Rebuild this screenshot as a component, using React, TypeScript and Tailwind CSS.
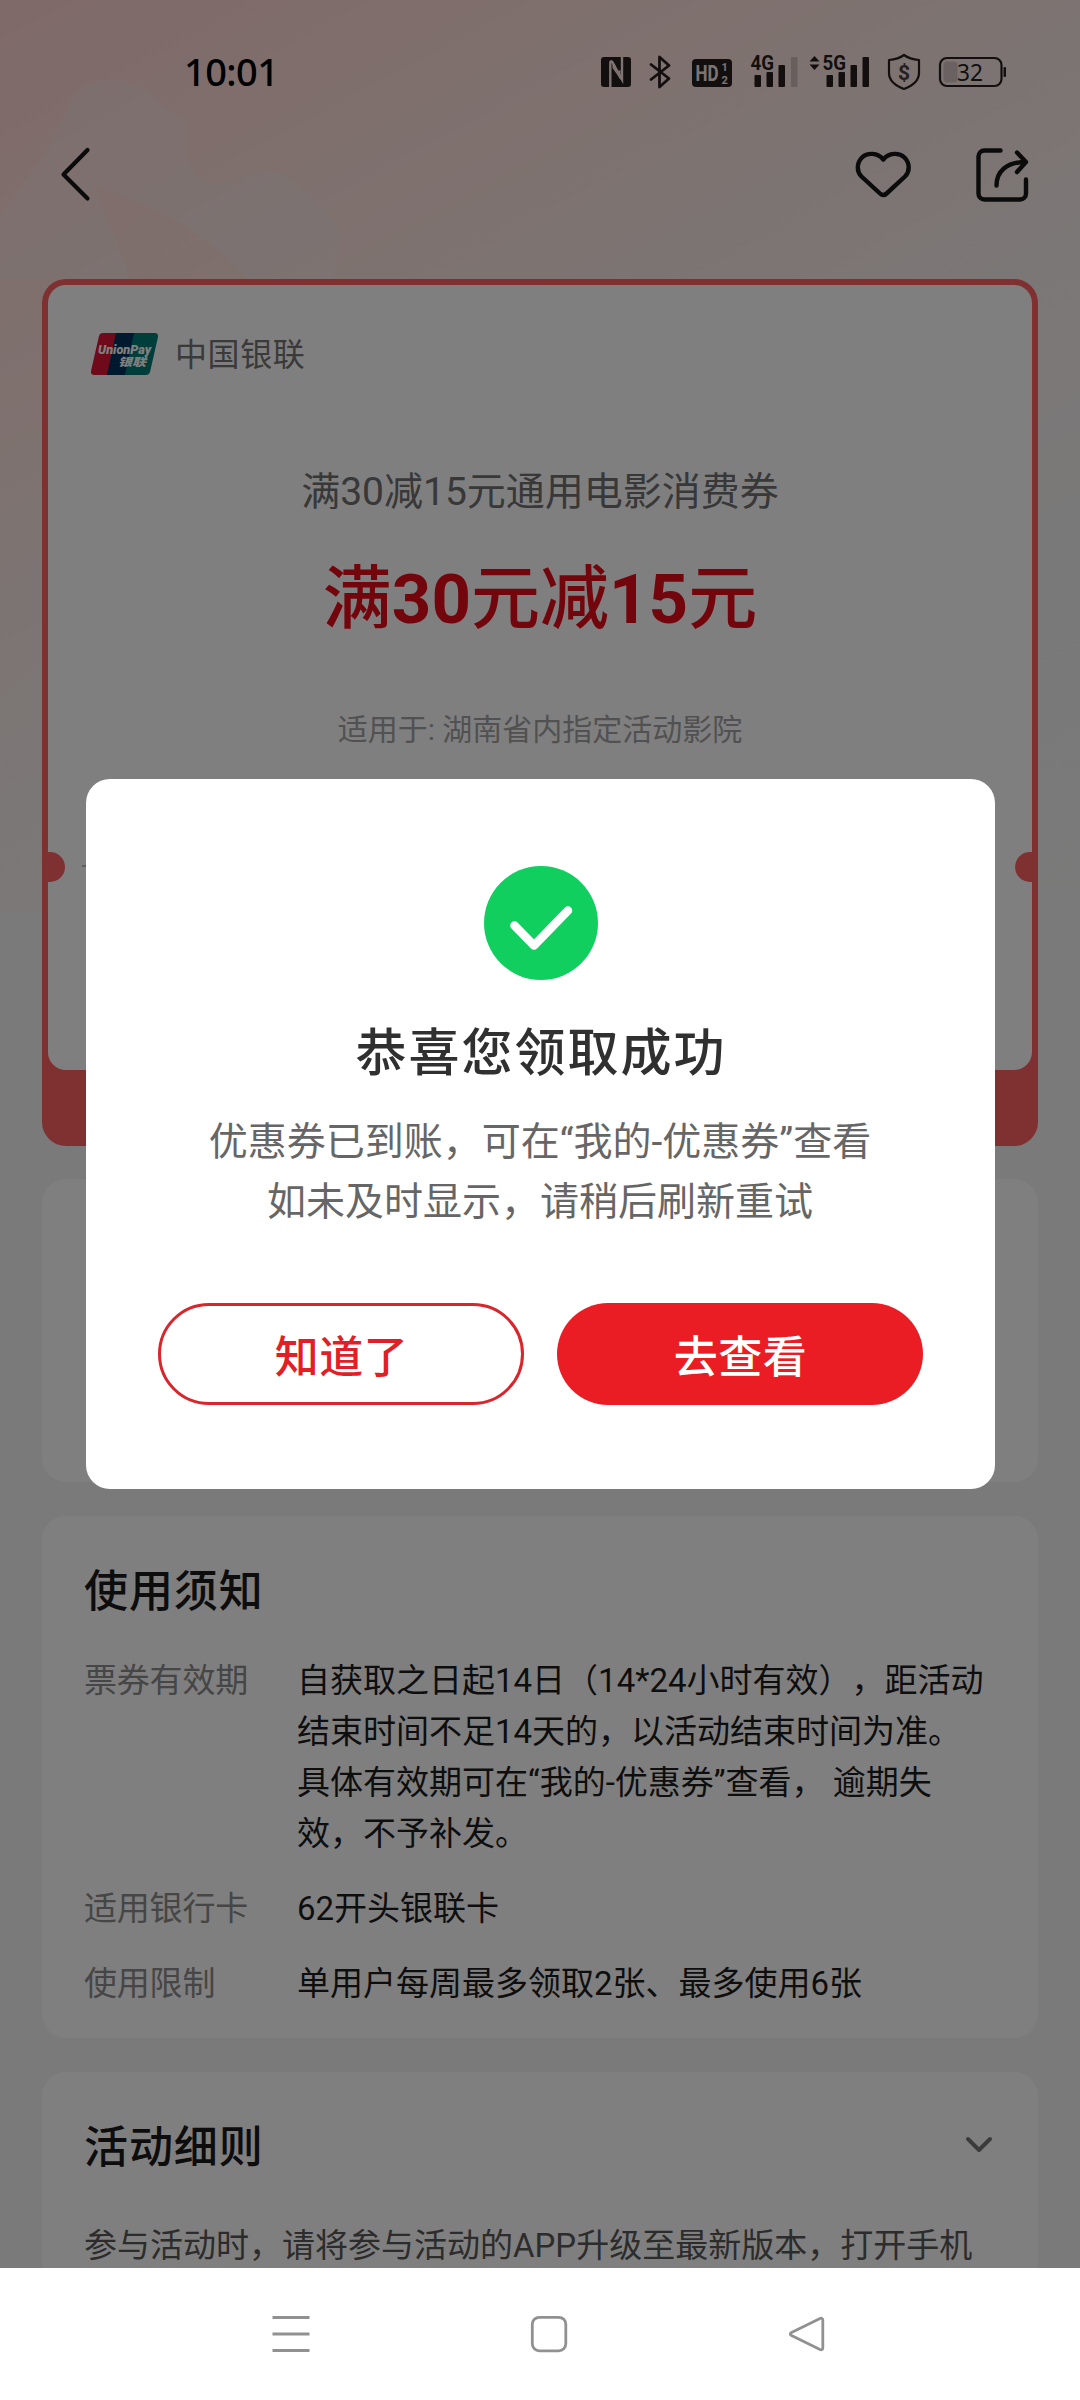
import type { ReactNode } from 'react'

const notices = [
    {
        label: '票券有效期',
        lines: [
            '自获取之日起14日（14*24小时有效），距活动',
            '结束时间不足14天的，以活动结束时间为准。',
            '具体有效期可在“我的-优惠券”查看， 逾期失',
            '效，不予补发。',
        ],
    },
    { label: '适用银行卡', lines: ['62开头银联卡'] },
    { label: '使用限制', lines: ['单用户每周最多领取2张、最多使用6张'] },
]

function StatusIcons() {
    return (
        <svg width="408" height="40" viewBox="600 52 408 40" fill="#261f1f" className="shrink-0">
            {/* NFC */}
            <rect x="601" y="57" width="30" height="30" rx="3" />
            <path d="M610.300 87V62.500c0-1.500 1-1.500 2-.500l9.700 17.500V57" fill="none" stroke="#fbe7e3" strokeWidth="2.400" />
            <path d="M612.500 62l3.500 4v7l-3.500-5zM615.500 72l5-2v10z" fill="#fbe7e3" />
            {/* Bluetooth */}
            <path d="M651 64.500l18 14-9.500 8.500V57l9.500 8.500-18 14" fill="none" stroke="#261f1f" strokeWidth="2.800" strokeLinejoin="round" strokeLinecap="round" />
            {/* HD */}
            <rect x="692" y="59" width="40" height="28" rx="4" />
            <text x="695.500" y="81" fontSize="22" textLength="23" lengthAdjust="spacingAndGlyphs" fill="#fbe7e3" className="font-['Roboto',sans-serif] font-bold">HD</text>
            <text x="721.500" y="71.200" fontSize="11" fill="#fbe7e3" className="font-['Roboto',sans-serif] font-bold">1</text>
            <text x="721.500" y="84.200" fontSize="11" fill="#fbe7e3" className="font-['Roboto',sans-serif] font-bold">2</text>
            {/* 4G */}
            <text x="750.500" y="70" fontSize="21" textLength="23.500" lengthAdjust="spacingAndGlyphs" className="font-['Roboto',sans-serif] font-bold">4G</text>
            <rect x="754.500" y="75" width="6.500" height="12" rx="1" />
            <rect x="766.500" y="72" width="6.500" height="15" rx="1" />
            <rect x="778.500" y="65" width="6.500" height="22" rx="1" />
            <rect x="791" y="57" width="6.500" height="30" rx="1" opacity="0.2" />
            {/* 5G */}
            <path d="M809.500 61.500l5-5.500 5 5.500zM809.500 64.500l5 5.500 5-5.500z" />
            <text x="822.500" y="70" fontSize="21" textLength="23.500" lengthAdjust="spacingAndGlyphs" className="font-['Roboto',sans-serif] font-bold">5G</text>
            <rect x="826.500" y="75" width="6.500" height="12" rx="1" />
            <rect x="838.500" y="72" width="6.500" height="15" rx="1" />
            <rect x="850.500" y="65" width="6.500" height="22" rx="1" />
            <rect x="862.500" y="57" width="6.500" height="30" rx="1" />
            {/* Shield */}
            <path d="M904 55c4 3 9 4.500 15 5v13c0 8-6 12.500-15 16-9-3.500-15-8-15-16V60c6-.500 11-2 15-5z" fill="none" stroke="#261f1f" strokeWidth="2.200" strokeLinejoin="round" />
            <text x="904" y="79.500" fontSize="21" textAnchor="middle" fill="#4a4242" className="font-['Roboto',sans-serif] font-bold">$</text>
            {/* Battery */}
            <rect x="943.500" y="61.500" width="14" height="21" rx="4" opacity="0.18" />
            <rect x="940" y="58" width="61.500" height="28" rx="7" fill="none" stroke="#261f1f" strokeWidth="2.200" />
            <rect x="1003.500" y="67" width="2.500" height="10" rx="1" />
            <text x="970" y="81" fontSize="24" textLength="26" lengthAdjust="spacingAndGlyphs" textAnchor="middle" className="font-['Noto_Sans',sans-serif]">32</text>
        </svg>
    )
}

function UnionPayLogo() {
    return (
        <svg width="67" height="42" viewBox="0 0 67 42">
            <path d="M12 0h17l-9 42H3c-2 0-3.500-1.500-3-4L8 3c.5-2 2-3 4-3z" fill="#dc1433" />
            <path d="M25 0h22l-9 42H16z" fill="#00335f" />
            <path d="M43 0h21c2 0 3.500 1.500 3 4l-8 35c-.5 2-2 3-4 3H34z" fill="#007d78" />
            <text x="7" y="20.500" fontSize="13" fill="#fff" textLength="53" lengthAdjust="spacingAndGlyphs" className="font-['Roboto',sans-serif] font-black italic">UnionPay</text>
            <text x="27" y="33" fontSize="11" fill="#fff" textLength="28" lengthAdjust="spacingAndGlyphs" className="font-['Noto_Sans_CJK_SC',sans-serif] font-black italic">银联</text>
        </svg>
    )
}

function Card({ className, children }: { className: string; children?: ReactNode }) {
    return <section className={`mx-[42px] rounded-[24px] bg-white px-[42px] ${className}`}>{children}</section>
}

export default function App() {
    return (
        <div className="relative flex h-[2400px] w-[1080px] flex-col overflow-hidden bg-[#f4f4f4] font-['Roboto','Noto_Sans_CJK_SC',sans-serif] [text-spacing-trim:space-all]">
            {/* Page backdrop */}
            <div className="absolute inset-x-0 top-0 h-[912px] bg-[linear-gradient(152deg,#ffd4d2_0%,#ffddd8_16%,#fce4df_30%,#f9e9e6_42%,#f7efed_56%,#f5f3f2_72%,#f4f4f4_100%)]">
                <svg width="400" height="760" viewBox="0 0 400 760" className="opacity-25">
                    <path d="M72 98c6-12 20-18 40-18 24 0 40 10 55 28l20 12c-4 32 0 62 32 63l38-13c20-2 40 12 50 26 14 12 30 18 31 40l-4 44H0V215l44-60z" fill="#f0f0f4" />
                    <path d="M96 188c50 12 110 44 152 91H130z" fill="#ffdcd6" />
                    <path d="M0 700l42-40v40L0 730z" fill="#ffffff" opacity="0.5" />
                </svg>
            </div>

            <main className="relative h-[2268px] overflow-hidden">
                {/* Status bar */}
                <div className="flex h-[144px] items-center justify-between pr-[72px] pl-[184px]">
                    <span className="-mt-[2px] font-['Noto_Sans',sans-serif] text-[38px] leading-[40px] font-medium tracking-[-0.6px] text-black">10:01</span>
                    <StatusIcons />
                </div>

                {/* Header */}
                <header className="flex h-[60px] items-center pr-[49px] pl-[58px] text-[#161616]">
                    <svg width="36" height="60" viewBox="0 0 36 60" fill="none" stroke="currentColor" strokeWidth="4.200" strokeLinecap="round" strokeLinejoin="round">
                        <path d="M29.500 6L5.500 30.500l24 24" />
                    </svg>
                    <svg width="60" height="60" viewBox="0 0 60 60" fill="none" stroke="currentColor" strokeWidth="4.400" strokeLinecap="round" strokeLinejoin="round" className="ml-auto">
                        <path d="M32.300 15.500C26.500 8.500 16.500 8.300 11 13.500 5.500 19 5.500 27.500 10.500 32.500L29 49.500c2.200 2 4.400 2 6.600 0L54 32.500c5-5 5-13.500-.500-19C48 8.300 38 8.500 32.300 15.500z" />
                    </svg>
                    <svg width="60" height="60" viewBox="0 0 60 60" fill="none" stroke="currentColor" strokeWidth="4.400" strokeLinecap="round" strokeLinejoin="round" className="ml-[60px]">
                        <path d="M29.500 6.500H13.500c-3.500 0-6 2.500-6 6v37c0 3.500 2.500 6 6 6H49c3.500 0 6-2.500 6-6V35.500" />
                        <path d="M25.500 41.500c0-14 10-23.500 29-23.500M46 8.500l9 9.500-9 10" />
                    </svg>
                </header>

                {/* Coupon */}
                <section className="mx-[42px] mt-[75px] h-[867px] rounded-[24px] bg-[#fe6062] p-[6px]">
                    <div className="relative h-[785px] overflow-hidden rounded-[18px] bg-white pt-[48px] text-center">
                        <div className="flex h-[42px] items-center pl-[43px]">
                            <UnionPayLogo />
                            <span className="ml-[17px] pt-[2px] text-[32px] leading-[42px] tracking-[0.6px] text-[#757575]">中国银联</span>
                        </div>
                        <p className="mt-[89px] text-[39px] leading-[56px] text-[#707070]">满30减15元通用电影消费券</p>
                        <p className="mt-[35px] text-[69px] leading-[90px] font-medium text-[#e60d19]">
                            满<b>30</b>元减<b>15</b>元
                        </p>
                        <p className="mt-[65px] text-[30px] leading-[40px] text-[#a3a3a3]">适用于: 湖南省内指定活动影院</p>
                        <div className="mr-[60px] ml-[34px] mt-[115px] border-t-2 border-dashed border-[#bbb]" />
                        <div className="absolute top-[567px] left-[-13px] size-[30px] rounded-full bg-[#fe6062]" />
                        <div className="absolute top-[567px] right-[-13px] size-[30px] rounded-full bg-[#fe6062]" />
                    </div>
                </section>

                <Card className="mt-[33px] h-[303px]" />

                {/* Usage notes */}
                <Card className="mt-[34px] h-[522px] pt-[46px]">
                    <h2 className="text-[44px] leading-[60px] font-medium tracking-[0.9px] text-[#1a1a1a]">使用须知</h2>
                    <dl className="mt-[33px] flex flex-col gap-[24px] text-[33px] leading-[51px]">
                        {notices.map(item => (
                            <div key={item.label} className="flex">
                                <dt className="w-[213px] shrink-0 tracking-[-0.2px] text-[#8c8c8c]">{item.label}</dt>
                                <dd className="text-[#1c1c1c]">
                                    {item.lines.map(line => (
                                        <div key={line} className="whitespace-nowrap">{line}</div>
                                    ))}
                                </dd>
                            </div>
                        ))}
                    </dl>
                </Card>

                {/* Activity rules */}
                <Card className="mt-[34px] h-[300px] pt-[46px]">
                    <div className="flex items-center justify-between">
                        <h2 className="text-[44px] leading-[60px] font-medium tracking-[0.9px] text-[#1a1a1a]">活动细则</h2>
                        <svg width="32" height="20" viewBox="0 0 32 20" fill="none" stroke="#777" strokeWidth="4" strokeLinecap="round" strokeLinejoin="round" className="mt-[-7px]">
                            <path d="M4 4l11 11L26 4" />
                        </svg>
                    </div>
                    <p className="mt-[42px] text-[33px] leading-[51px] whitespace-nowrap text-[#595959]">参与活动时，请将参与活动的APP升级至最新版本，打开手机</p>
                </Card>
            </main>

            {/* Success dialog */}
            <div className="absolute inset-x-0 top-0 flex h-[2268px] items-start justify-center bg-black/50 pt-[779px]">
                <div role="dialog" className="flex h-[710px] w-[909px] flex-col items-center rounded-[24px] bg-white pt-[87px]">
                    <svg width="114" height="114" viewBox="0 0 114 114" className="ml-[2px]">
                        <circle cx="57" cy="57" r="57" fill="#10cf5f" />
                        <path d="M30.500 59.500l19.500 20L84 44.500" fill="none" stroke="#fff" strokeWidth="8.500" strokeLinecap="round" strokeLinejoin="round" />
                    </svg>
                    <h1 className="mt-[39px] pl-[2px] text-[51px] leading-[70px] font-medium tracking-[2px] text-[#303030]">恭喜您领取成功</h1>
                    <p className="mt-[23px] text-center text-[39px] leading-[60px] whitespace-nowrap text-[#666]">
                        优惠券已到账，可在“我的-优惠券”查看
                        <br />
                        如未及时显示，请稍后刷新重试
                    </p>
                    <div className="mt-[71px] flex gap-[33px] text-[44px] font-medium tracking-[0.5px]">
                        <button className="h-[102px] w-[366px] rounded-full border-[3px] border-[#d9252b] pt-[7px] pl-[2px] text-[#e01f26]">知道了</button>
                        <button className="h-[102px] w-[366px] rounded-full bg-[#e91d23] pt-[7px] pl-[2px] text-white">去查看</button>
                    </div>
                </div>
            </div>

            {/* System navigation */}
            <nav className="relative flex h-[132px] shrink-0 items-center bg-white pl-[271px]">
                <svg width="555" height="40" viewBox="271 2314 555 40" fill="none" stroke="#919191" strokeWidth="2.800" strokeLinejoin="round">
                    <path d="M272.500 2317.500h37M272.500 2334h37M272.500 2350.500h37" />
                    <rect x="532.300" y="2317.300" width="33.500" height="33.500" rx="7" />
                    <path d="M820 2318.500l-28.500 14q-2.500 1.500 0 3l28.500 14q2.500 1 2.800-1.500v-28q-.300-2.500-2.800-1.500z" />
                </svg>
            </nav>
        </div>
    )
}
